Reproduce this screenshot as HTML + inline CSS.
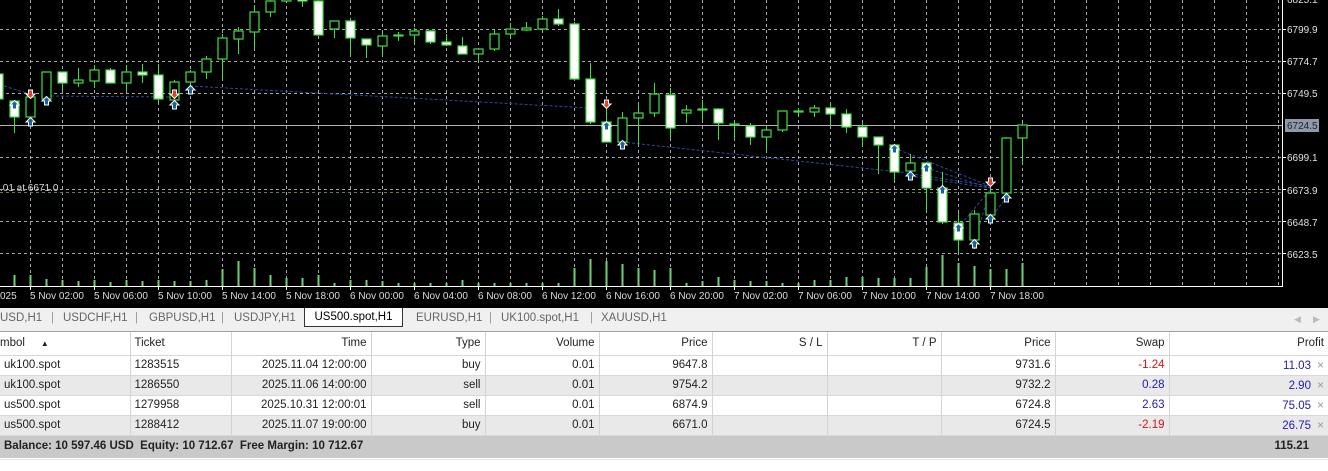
<!DOCTYPE html>
<html><head><meta charset="utf-8"><style>
*{margin:0;padding:0;box-sizing:border-box}
body{width:1328px;height:471px;overflow:hidden;background:#fff;font-family:"Liberation Sans",sans-serif;position:relative}
#chart{position:absolute;left:0;top:0;width:1328px;height:308px;background:#000}
#tabs{position:absolute;left:0;top:308px;width:1328px;height:24px;background:#f0f0f0;border-bottom:1px solid #a0a0a0;font-size:11.5px;color:#666}
#tabs span{position:absolute;top:4px;white-space:nowrap}
#tabs .act{top:0;left:304px;width:99px;height:19px;background:#fff;border:1px solid #333;border-top:none;color:#000;text-align:center;padding-top:3px}
table{position:absolute;left:0;top:332px;border-collapse:collapse;table-layout:fixed;width:1328px;font-size:11.5px}
td{height:20px;border-right:1px solid #d4d4d4;border-bottom:1px solid #d8d8d8;padding:0 4px;white-space:nowrap;overflow:hidden;text-align:right;color:#222}
tr.h td{height:23px;color:#222}
tr.g td{background:#e9e9e9}
td.l{text-align:left}
.r{color:#e01010}.b{color:#2020b0}
.x{color:#999;margin-left:6px;font-size:12px}
#bal{position:absolute;left:0;top:436px;width:1328px;height:22px;background:#c9c9c9;font-weight:bold;font-size:11.5px;color:#222}
#bal span{position:absolute;top:4px}
#foot{position:absolute;left:0;top:459px;width:1328px;height:1px;background:#e8e8e8}
</style></head><body>
<div id="chart">
<svg width="1328" height="308" xmlns="http://www.w3.org/2000/svg" font-family="Liberation Sans, sans-serif">
<g stroke="#a8a8a8" stroke-width="1" stroke-dasharray="3,3" fill="none">
<path d="M0 29.5H1282M0 61.5H1282M0 93.5H1282M0 157.5H1282M0 189.5H1282M0 221.5H1282M0 253.5H1282"/>
<path d="M30.5 0V286M62.5 0V286M94.5 0V286M126.5 0V286M158.5 0V286M190.5 0V286M222.5 0V286M254.5 0V286M286.5 0V286M318.5 0V286M350.5 0V286M382.5 0V286M414.5 0V286M446.5 0V286M478.5 0V286M510.5 0V286M542.5 0V286M574.5 0V286M606.5 0V286M638.5 0V286M670.5 0V286M702.5 0V286M734.5 0V286M766.5 0V286M798.5 0V286M830.5 0V286M862.5 0V286M894.5 0V286M926.5 0V286M958.5 0V286M990.5 0V286M1022.5 0V286M1054.5 0V286M1086.5 0V286M1118.5 0V286M1150.5 0V286M1182.5 0V286M1214.5 0V286M1246.5 0V286M1278.5 0V286"/>
</g>
<path d="M0 192.5H1282" stroke="#4c8a4c" stroke-dasharray="3,3"/>
<path d="M0 125.5H1282" stroke="#b4b4b4"/>
<g stroke="#2a4aa0" stroke-width="1" stroke-dasharray="3,2" fill="none">
<path d="M4 86L30 94M46 96L174 97M190 86L590 108M622 142L900 172L990 186M894 148L990 186M910 176L990 188M926 168L990 188M958 228L990 190M974 244L990 190M990 219L1006 198"/>
</g>
<g stroke="#6fd07a" stroke-width="2">
<path d="M14.5 286V275M30.5 286V275M46.5 286V279M62.5 286V280M78.5 286V281M94.5 286V280M110.5 286V282M126.5 286V280M142.5 286V281M158.5 286V280M174.5 286V281M190.5 286V281M206.5 286V280M222.5 286V269M238.5 286V261M254.5 286V268M270.5 286V275M286.5 286V278M302.5 286V278M318.5 286V275M334.5 286V283M350.5 286V280M366.5 286V280M382.5 286V281M398.5 286V283M414.5 286V283M430.5 286V283M446.5 286V283M462.5 286V280M478.5 286V283M494.5 286V283M510.5 286V283M526.5 286V283M542.5 286V283M558.5 286V283M574.5 286V268M590.5 286V259M606.5 286V261M622.5 286V264M638.5 286V268M654.5 286V270M670.5 286V268M686.5 286V283M702.5 286V281M718.5 286V277M734.5 286V280M750.5 286V281M766.5 286V281M782.5 286V283M798.5 286V283M814.5 286V280M830.5 286V280M846.5 286V277M862.5 286V277M878.5 286V278M894.5 286V278M910.5 286V278M926.5 286V267M942.5 286V255M958.5 286V263M974.5 286V266M990.5 286V269M1006.5 286V269M1022.5 286V263"/>
</g>
<g stroke="#3ee03e" stroke-width="1">
<path d="M14.5 100V133M30.5 90V125M46.5 72V99M62.5 72V90M78.5 68V87M94.5 65V88M110.5 68V83M126.5 65V90M142.5 64V83M158.5 64V102M174.5 80V100M190.5 70V87M206.5 56V79M222.5 34V80M238.5 27V54M254.5 5V48M270.5 0V17M302.5 0V7M318.5 0V35M334.5 21V38M350.5 21V55M366.5 39V58M382.5 33V56M398.5 32V41M414.5 28V42M430.5 30V44M446.5 34V46M462.5 37V54M478.5 49V61M494.5 29V51M510.5 23V37M526.5 22V31M542.5 16V30M558.5 9V26M574.5 22V79M590.5 63V124M606.5 102V142M622.5 112V142M638.5 105V144M654.5 83V117M670.5 88V138M686.5 105V123M702.5 100V121M718.5 108V140M734.5 123V140M750.5 123V145M766.5 126V152M782.5 111V132M798.5 108V115M814.5 105V117M830.5 102V126M846.5 109V133M862.5 123V147M878.5 137V174M894.5 145V182M910.5 154V176M926.5 163V210M942.5 172V224M958.5 213V253M974.5 210V249M990.5 190V219M1006.5 137V193M1022.5 122V163"/>
</g>
<g stroke="#3ee03e" stroke-width="1.2" fill="#000">
<rect x="26" y="97" width="9" height="20"/><rect x="42" y="72" width="9" height="27"/><rect x="74" y="80" width="9" height="3"/><rect x="90" y="70" width="9" height="11"/><rect x="122" y="72" width="9" height="11"/><rect x="170" y="82" width="9" height="18"/><rect x="186" y="72" width="9" height="10"/><rect x="202" y="59" width="9" height="13"/><rect x="218" y="38" width="9" height="21"/><rect x="234" y="31" width="9" height="8"/><rect x="250" y="12" width="9" height="20"/><rect x="266" y="1" width="9" height="11"/><rect x="282" y="-2" width="9" height="3"/><rect x="330" y="21" width="9" height="8"/><rect x="378" y="36" width="9" height="10"/><rect x="394" y="35" width="9" height="1"/><rect x="410" y="31" width="9" height="4"/><rect x="474" y="49" width="9" height="5"/><rect x="490" y="34" width="9" height="15"/><rect x="506" y="29" width="9" height="5"/><rect x="522" y="28" width="9" height="2"/><rect x="538" y="19" width="9" height="10"/><rect x="618" y="118" width="9" height="24"/><rect x="634" y="113" width="9" height="5"/><rect x="650" y="94" width="9" height="19"/><rect x="682" y="110" width="9" height="3"/><rect x="762" y="130" width="9" height="7"/><rect x="778" y="111" width="9" height="19"/><rect x="794" y="111" width="9" height="1"/><rect x="810" y="108" width="9" height="4"/><rect x="906" y="163" width="9" height="8"/><rect x="970" y="214" width="9" height="26"/><rect x="986" y="193" width="9" height="22"/><rect x="1002" y="138" width="9" height="55"/><rect x="1018" y="125" width="9" height="13"/>
</g>
<g stroke="#3ee03e" stroke-width="1.2" fill="#fff">
<rect x="-6" y="74" width="9" height="25"/><rect x="10" y="101" width="9" height="16"/><rect x="58" y="72" width="9" height="11"/><rect x="106" y="70" width="9" height="13"/><rect x="138" y="72" width="9" height="3"/><rect x="154" y="75" width="9" height="24"/><rect x="298" y="-2" width="9" height="3"/><rect x="314" y="1" width="9" height="34"/><rect x="346" y="21" width="9" height="17"/><rect x="362" y="39" width="9" height="6"/><rect x="426" y="31" width="9" height="11"/><rect x="442" y="42" width="9" height="3"/><rect x="458" y="46" width="9" height="8"/><rect x="554" y="19" width="9" height="5"/><rect x="570" y="24" width="9" height="55"/><rect x="586" y="79" width="9" height="43"/><rect x="602" y="122" width="9" height="20"/><rect x="666" y="95" width="9" height="33"/><rect x="698" y="109" width="9" height="1"/><rect x="714" y="109" width="9" height="14"/><rect x="730" y="124" width="9" height="1"/><rect x="746" y="126" width="9" height="11"/><rect x="826" y="108" width="9" height="6"/><rect x="842" y="114" width="9" height="13"/><rect x="858" y="127" width="9" height="10"/><rect x="874" y="137" width="9" height="8"/><rect x="890" y="145" width="9" height="27"/><rect x="922" y="163" width="9" height="25"/><rect x="938" y="188" width="9" height="34"/><rect x="954" y="223" width="9" height="17"/>
</g>
<defs>
<path id="up" d="M0 -4.5L4.5 0H2V4H-2V0H-4.5Z" fill="#1a5fa8" stroke="#fff" stroke-width="1"/>
<path id="dn" d="M0 4.5L4.5 0H2V-4H-2V0H-4.5Z" fill="#e04030" stroke="#fff" stroke-width="1"/>
</defs>
<use href="#up" x="14.5" y="105"/><use href="#up" x="30.5" y="122"/><use href="#up" x="46.5" y="101"/><use href="#up" x="174.5" y="105"/><use href="#up" x="190.5" y="90"/><use href="#up" x="606.5" y="126"/><use href="#up" x="622.5" y="145"/><use href="#up" x="894.5" y="149"/><use href="#up" x="910.5" y="176"/><use href="#up" x="926.5" y="168"/><use href="#up" x="942.5" y="190"/><use href="#up" x="958.5" y="228"/><use href="#up" x="974.5" y="244"/><use href="#up" x="990.5" y="219"/><use href="#up" x="1006.5" y="198"/>
<use href="#dn" x="30.5" y="94"/><use href="#dn" x="174.5" y="94"/><use href="#dn" x="606.5" y="104"/><use href="#dn" x="990.5" y="182"/>
<text x="0" y="191" font-size="10" fill="#d8d8d8">.01 at 6671.0</text>
<path d="M1282.5 0V286.5H0" stroke="#fff" fill="none"/>
<g stroke="#fff"><path d="M1282 29.5h4M1282 61.5h4M1282 93.5h4M1282 157.5h4M1282 189.5h4M1282 221.5h4M1282 253.5h4M30.5 286v4M94.5 286v4M158.5 286v4M222.5 286v4M286.5 286v4M350.5 286v4M414.5 286v4M478.5 286v4M542.5 286v4M606.5 286v4M670.5 286v4M734.5 286v4M798.5 286v4M862.5 286v4M926.5 286v4M990.5 286v4"/></g>
<g font-size="10" fill="#e0e0e0">
<text x="1287" y="3">6825.1</text>
<text x="1287" y="33">6799.9</text><text x="1287" y="65">6774.7</text><text x="1287" y="97">6749.5</text>
<text x="1287" y="161">6699.1</text><text x="1287" y="194">6673.9</text><text x="1287" y="226">6648.7</text><text x="1287" y="258">6623.5</text>
</g>
<rect x="1285" y="119" width="34" height="13" fill="#8e9aa8"/>
<text x="1287" y="129" font-size="10" fill="#1a2230">6724.5</text>
<g font-size="10" fill="#dcdcdc">
<text x="0" y="299">025</text><text x="30" y="299">5 Nov 02:00</text><text x="94" y="299">5 Nov 06:00</text><text x="158" y="299">5 Nov 10:00</text><text x="222" y="299">5 Nov 14:00</text><text x="286" y="299">5 Nov 18:00</text><text x="350" y="299">6 Nov 00:00</text><text x="414" y="299">6 Nov 04:00</text><text x="478" y="299">6 Nov 08:00</text><text x="542" y="299">6 Nov 12:00</text><text x="606" y="299">6 Nov 16:00</text><text x="670" y="299">6 Nov 20:00</text><text x="734" y="299">7 Nov 02:00</text><text x="798" y="299">7 Nov 06:00</text><text x="862" y="299">7 Nov 10:00</text><text x="926" y="299">7 Nov 14:00</text><text x="990" y="299">7 Nov 18:00</text>
</g>
</svg>
</div>
<div id="tabs">
<span style="left:0">USD,H1</span><span style="left:51px;color:#999">|</span>
<span style="left:63px">USDCHF,H1</span><span style="left:135px;color:#999">|</span>
<span style="left:149px">GBPUSD,H1</span><span style="left:221px;color:#999">|</span>
<span style="left:234px">USDJPY,H1</span>
<span class="act">US500.spot,H1</span>
<span style="left:416px">EURUSD,H1</span><span style="left:489px;color:#999">|</span>
<span style="left:501px">UK100.spot,H1</span><span style="left:590px;color:#999">|</span>
<span style="left:601px">XAUUSD,H1</span>
<span style="left:1294px;color:#bbb;font-size:9px;top:6px">◀</span><span style="left:1313px;color:#bbb;font-size:9px;top:6px">▶</span>
</div>
<table>
<colgroup><col style="width:130px"><col style="width:101px"><col style="width:140px"><col style="width:114px"><col style="width:114px"><col style="width:113px"><col style="width:115px"><col style="width:114px"><col style="width:114px"><col style="width:114px"><col style="width:159px"></colgroup>
<tr class="h"><td class="l" style="padding-left:0">mbol &nbsp; &nbsp; <span style="font-size:8px">▲</span></td><td class="l">Ticket</td><td>Time</td><td>Type</td><td>Volume</td><td>Price</td><td>S / L</td><td>T / P</td><td>Price</td><td>Swap</td><td style="border-right:none">Profit</td></tr>
<tr><td class="l">uk100.spot</td><td class="l">1283515</td><td>2025.11.04 12:00:00</td><td>buy</td><td>0.01</td><td>9647.8</td><td></td><td></td><td>9731.6</td><td class="r">-1.24</td><td style="border-right:none"><span class="b">11.03</span><span class="x">×</span></td></tr>
<tr class="g"><td class="l">uk100.spot</td><td class="l">1286550</td><td>2025.11.06 14:00:00</td><td>sell</td><td>0.01</td><td>9754.2</td><td></td><td></td><td>9732.2</td><td class="b">0.28</td><td style="border-right:none"><span class="b">2.90</span><span class="x">×</span></td></tr>
<tr><td class="l">us500.spot</td><td class="l">1279958</td><td>2025.10.31 12:00:01</td><td>sell</td><td>0.01</td><td>6874.9</td><td></td><td></td><td>6724.8</td><td class="b">2.63</td><td style="border-right:none"><span class="b">75.05</span><span class="x">×</span></td></tr>
<tr class="g"><td class="l">us500.spot</td><td class="l">1288412</td><td>2025.11.07 19:00:00</td><td>buy</td><td>0.01</td><td>6671.0</td><td></td><td></td><td>6724.5</td><td class="r">-2.19</td><td style="border-right:none"><span class="b">26.75</span><span class="x">×</span></td></tr>
</table>
<div id="bal"><span style="left:4px">Balance: 10 597.46 USD&nbsp; Equity: 10 712.67&nbsp; Free Margin: 10 712.67</span><span style="right:19px">115.21</span></div>
<div id="foot"></div>
</body></html>
